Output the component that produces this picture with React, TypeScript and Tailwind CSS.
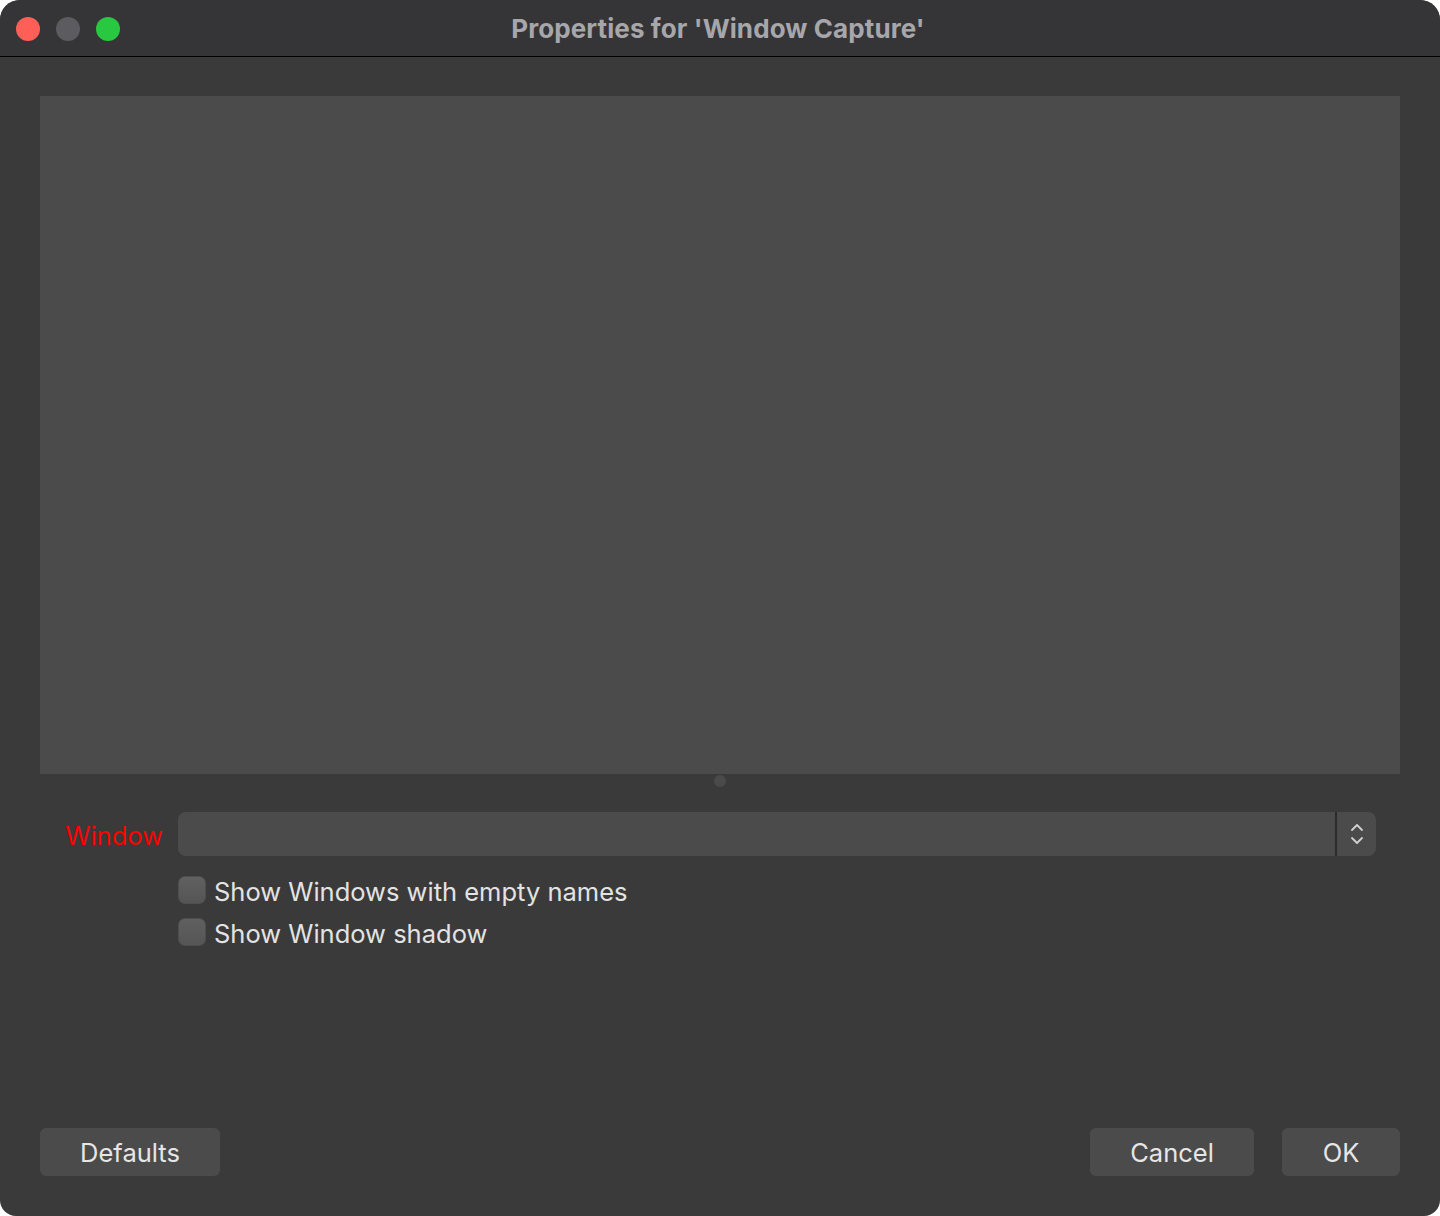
import React from "react";

export default function App() {
  return (
    <div className="w-[1440px] h-[1216px] bg-white" style={{ fontFamily: "Inter, 'Liberation Sans', sans-serif" }}>
      <div className="w-full h-full flex flex-col rounded-t-[20px] rounded-b-[16px] overflow-hidden bg-[#3a3a3a]">
        <div className="h-[57px] flex items-center bg-[#353538] border-b border-black relative shrink-0">
          <div className="flex items-center gap-[16px] pl-[16px] pt-[1px]">
            <span className="w-[24px] h-[24px] rounded-full bg-[#ff5f57]" />
            <span className="w-[24px] h-[24px] rounded-full bg-[#5b5b60]" />
            <span className="w-[24px] h-[24px] rounded-full bg-[#28c840]" />
          </div>
          <div className="absolute inset-0 flex items-center justify-center pointer-events-none">
            <span className="text-[26px] font-bold text-[#a7a7ab] tracking-[0.1px] ml-[-4px]">Properties for 'Window Capture'</span>
          </div>
        </div>
        <div className="flex-1 flex flex-col px-[40px] pt-[39px] pb-[40px]">
          <div className="h-[678px] bg-[#4b4b4b]" />
          <div className="h-[14px] flex items-center justify-center">
            <span className="w-[12px] h-[12px] rounded-full bg-[#4a4a4a]" />
          </div>
          <div className="flex items-center mt-[24px] pr-[24px]">
            <div className="w-[123px] text-right text-[#ff0000] text-[25.5px] pt-[4px]">Window</div>
            <div className="ml-[15px] flex-1 h-[44px] rounded-[8px] bg-[#4b4b4b] flex justify-end">
              <div className="w-[2px] h-full bg-[#2c2c2c] mr-[1px]" />
              <div className="w-[38px] flex items-center justify-center">
                <svg width="16" height="30" viewBox="0 0 16 30" fill="none" stroke="#d0d0d0" strokeWidth="1.8" strokeLinecap="round" strokeLinejoin="round">
                  <path d="M3 11 L8 6 L13 11" />
                  <path d="M3 19 L8 24 L13 19" />
                </svg>
              </div>
            </div>
          </div>
          <div className="ml-[138px] mt-[20px] flex flex-col gap-[14px]">
            <label className="flex items-center gap-[8px] h-[28px]">
              <span className="w-[28px] h-[28px] rounded-[7px] bg-gradient-to-b from-[#606060] to-[#555555] border border-[#4e4e4e]" />
              <span className="text-[25.5px] text-[#e3e3e3] pt-[4px]">Show Windows with empty names</span>
            </label>
            <label className="flex items-center gap-[8px] h-[28px]">
              <span className="w-[28px] h-[28px] rounded-[7px] bg-gradient-to-b from-[#606060] to-[#555555] border border-[#4e4e4e]" />
              <span className="text-[25.5px] text-[#e3e3e3] pt-[4px]">Show Window shadow</span>
            </label>
          </div>
          <div className="flex-1" />
          <div className="flex items-center">
            <button className="w-[180px] h-[48px] rounded-[6px] bg-[#4b4b4b] text-[25.5px] text-[#e6e6e6] pt-[3px]">Defaults</button>
            <div className="flex-1" />
            <button className="w-[164px] h-[48px] rounded-[6px] bg-[#4b4b4b] text-[25.5px] text-[#e6e6e6] pt-[3px]">Cancel</button>
            <button className="ml-[28px] w-[118px] h-[48px] rounded-[6px] bg-[#4b4b4b] text-[25.5px] text-[#e6e6e6] pt-[3px]">OK</button>
          </div>
        </div>
      </div>
    </div>
  );
}
